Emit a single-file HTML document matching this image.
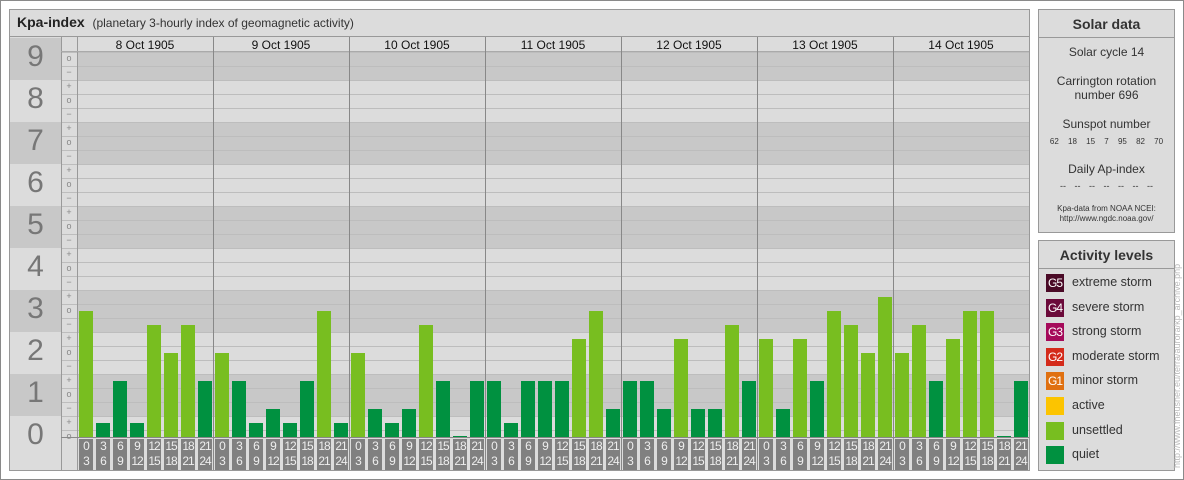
<!DOCTYPE html>
<html><head><meta charset="utf-8"><style>
*{margin:0;padding:0;box-sizing:border-box}
body{width:1184px;height:480px;background:#fff;font-family:"Liberation Sans",sans-serif;position:relative;overflow:hidden}
.a{position:absolute}
#outer{left:0;top:0;width:1184px;height:480px;border:1px solid #8a8a8a}
.box{background:#dcdcdc;border:1px solid #999}
.t{text-align:center;color:#333}
</style></head><body>
<div class="a" id="outer"></div>
<div class="a box" style="left:9px;top:9px;width:1021px;height:462px"></div>
<div class="a" style="left:10px;top:10px;width:1019px;height:27px;border-bottom:1px solid #999;background:#dcdcdc"></div>
<div class="a" style="left:17px;top:14px;font-size:14px;color:#222;white-space:nowrap"><b>Kpa-index</b>&nbsp; <span style="font-size:12px;color:#333">(planetary 3-hourly index of geomagnetic activity)</span></div>
<div id="chart"></div>
<div class="a box" style="left:1038px;top:9px;width:137px;height:224px"></div>
<div class="a" style="left:1039px;top:10px;width:135px;height:28px;border-bottom:1px solid #999"></div>
<div class="a t" style="left:1039px;top:16px;width:135px;font-size:14px;font-weight:bold;color:#333">Solar data</div>
<div class="a t" style="left:1039px;top:45px;width:135px;font-size:12px">Solar cycle 14</div>
<div class="a t" style="left:1039px;top:74px;width:135px;font-size:12px;line-height:14px">Carrington rotation<br>number 696</div>
<div class="a t" style="left:1039px;top:117px;width:135px;font-size:12px">Sunspot number</div>
<div class="a t" style="left:1039px;top:137px;width:135px;font-size:8px;word-spacing:7px">62 18 15 7 95 82 70</div>
<div class="a t" style="left:1039px;top:162px;width:135px;font-size:12px">Daily Ap-index</div>
<div class="a t" style="left:1039px;top:181px;width:135px;font-size:9px;word-spacing:6px">-- -- -- -- -- -- --</div>
<div class="a t" style="left:1039px;top:204px;width:135px;font-size:8px;line-height:10px">Kpa-data from NOAA NCEI:<br>http://www.ngdc.noaa.gov/</div>
<div class="a box" style="left:1038px;top:240px;width:137px;height:231px"></div>
<div class="a" style="left:1039px;top:241px;width:135px;height:28px;border-bottom:1px solid #999"></div>
<div class="a t" style="left:1039px;top:247px;width:135px;font-size:14px;font-weight:bold;color:#333">Activity levels</div>
<div id="leg"></div>
<div class="a" style="left:1172px;top:468px;transform-origin:0 0;transform:rotate(-90deg);font-size:9px;color:#bbb;white-space:nowrap;width:215px">http://www.fheusner.eu/terra/aurora/kp_archive.php</div>
<script>
(function(){
var h='';
var base=437;
for(var n=0;n<=9;n++){
 var tp=base-n*42-21, bt=base-n*42+21; if(tp<37)tp=37;
 var dark=n%2==1;
 var col=dark?'#c8c8c8':'#dcdcdc';
 var pt=tp<51?51:tp, pb=Math.min(bt,base);
 h+='<div class="a" style="left:77px;top:'+pt+'px;width:952px;height:'+(pb-pt)+'px;background:'+col+'"></div>';
 var nb=n==0?470:bt;
 h+='<div class="a" style="left:10px;top:'+tp+'px;width:51px;height:'+(nb-tp)+'px;background:'+col+'"></div>';
 h+='<div class="a t" style="left:10px;top:'+(base-n*42-19)+'px;width:51px;font-size:30px;color:#777">'+n+'</div>';
}
for(var k=0;k<=27;k++){
 var y=base-7-14*k; if(y<51)break;
 h+='<div class="a" style="left:61px;top:'+y+'px;width:968px;height:1px;background:#bdbdbd"></div>';
}
for(var k=0;k<=27;k++){
 var y=base-14*k; if(y<55)break;
 var s=k%3==0?'o':(k%3==1?'+':'\u2212');
 h+='<div class="a t" style="left:61px;top:'+(y-7)+'px;width:16px;font-size:9px;line-height:12px;color:#888">'+s+'</div>';
}
h+='<div class="a" style="left:61px;top:37px;width:1px;height:433px;background:#999"></div>';
h+='<div class="a" style="left:77px;top:37px;width:1px;height:433px;background:#999"></div>';
h+='<div class="a" style="left:61px;top:51px;width:968px;height:1px;background:#aaa"></div>';
h+='<div class="a" style="left:61px;top:437px;width:968px;height:1px;background:#888"></div>';
var days=['8','9','10','11','12','13','14'];
var v=[[9,1,4,1,8,6,8,4],[6,4,1,2,1,4,9,1],[6,2,1,2,8,4,0,4],[4,1,4,4,4,7,9,2],[4,4,2,7,2,2,8,4],[7,2,7,4,9,8,6,10],[6,8,4,7,9,9,0,4]];
var lab=[['0','3'],['3','6'],['6','9'],['9','12'],['12','15'],['15','18'],['18','21'],['21','24']];
for(var d=0;d<7;d++){
 var x0=77+d*136;
 if(d>0)h+='<div class="a" style="left:'+x0+'px;top:37px;width:1px;height:433px;background:#888"></div>';
 h+='<div class="a t" style="left:'+x0+'px;top:38px;width:136px;font-size:12px;color:#111">'+days[d]+' Oct 1905</div>';
 for(var i=0;i<8;i++){
  var bx=x0+2+i*17, val=v[d][i], ht=val==0?1:val*14;
  h+='<div class="a" style="left:'+bx+'px;top:'+(base-ht)+'px;width:14px;height:'+ht+'px;background:'+(val>=5?'#78be20':'#009140')+'"></div>';
  h+='<div class="a" style="left:'+bx+'px;top:439px;width:14px;height:31px;background:#808080;color:#eee;font-size:12px;line-height:15px;text-align:center;letter-spacing:-1px">'+lab[i][0]+'<br>'+lab[i][1]+'</div>';
 }
}
document.getElementById('chart').innerHTML=h;
var L=[['G5','#4a0a26','extreme storm'],['G4','#6b0a3a','severe storm'],['G3','#a50a5a','strong storm'],['G2','#d42a1a','moderate storm'],['G1','#e07010','minor storm'],['','#fcc400','active'],['','#78be20','unsettled'],['','#009140','quiet']];
var g='';
for(var j=0;j<8;j++){
 var y=274+j*24.6;
 g+='<div class="a" style="left:1046px;top:'+y+'px;width:18px;height:18px;background:'+L[j][1]+';color:#fff;font-size:12px;line-height:18px;text-align:center;letter-spacing:-1px">'+L[j][0]+'</div>';
 g+='<div class="a" style="left:1072px;top:'+(y+1)+'px;font-size:12.5px;color:#333;white-space:nowrap">'+L[j][2]+'</div>';
}
document.getElementById('leg').innerHTML=g;
})();
</script>
</body></html>
